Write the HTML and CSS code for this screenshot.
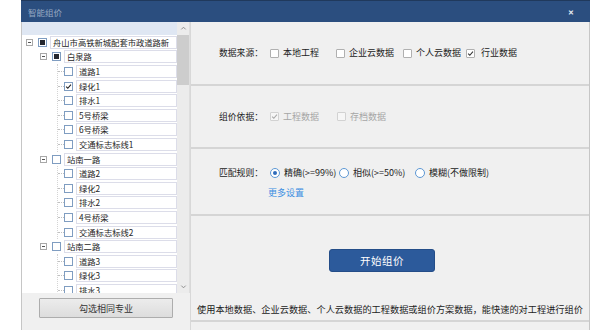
FILE: index.html
```html
<!DOCTYPE html>
<html lang="zh">
<head>
    <meta charset="UTF-8">
    <title>智能组价</title>
    <link rel="stylesheet" href="styles.css">
</head>
<body>
    <div class="dialog">
        <div class="titlebar">
            <span class="title">智能组价</span>
            <span class="close">✕</span>
        </div>

        <div class="body">
            <!-- Left: project tree -->
            <div class="left">
                <div class="tree-box">
                    <div class="tree">
                        <div class="tree-head"></div>

                        <div class="node root">
                            <span class="exp"></span><span class="tcb partial"></span><span class="lbl">舟山市高铁新城配套市政道路新</span>
                        </div>

                        <div class="node group">
                            <span class="exp"></span><span class="tcb partial"></span><span class="lbl">白泉路</span>
                        </div>
                        <div class="children">
                            <div class="node leaf"><span class="line"></span><span class="tcb"></span><span class="lbl">道路1</span></div>
                            <div class="node leaf"><span class="line"></span><span class="tcb checked"><svg viewBox="0 0 8 8"><polyline points="1.3,4.2 3.2,6 6.8,1.8"/></svg></span><span class="lbl">绿化1</span></div>
                            <div class="node leaf"><span class="line"></span><span class="tcb"></span><span class="lbl">排水1</span></div>
                            <div class="node leaf"><span class="line"></span><span class="tcb"></span><span class="lbl">5号桥梁</span></div>
                            <div class="node leaf"><span class="line"></span><span class="tcb"></span><span class="lbl">6号桥梁</span></div>
                            <div class="node leaf"><span class="line"></span><span class="tcb"></span><span class="lbl">交通标志标线1</span></div>
                        </div>

                        <div class="node group">
                            <span class="exp"></span><span class="tcb"></span><span class="lbl">站南一路</span>
                        </div>
                        <div class="children">
                            <div class="node leaf"><span class="line"></span><span class="tcb"></span><span class="lbl">道路2</span></div>
                            <div class="node leaf"><span class="line"></span><span class="tcb"></span><span class="lbl">绿化2</span></div>
                            <div class="node leaf"><span class="line"></span><span class="tcb"></span><span class="lbl">排水2</span></div>
                            <div class="node leaf"><span class="line"></span><span class="tcb"></span><span class="lbl">4号桥梁</span></div>
                            <div class="node leaf"><span class="line"></span><span class="tcb"></span><span class="lbl">交通标志标线2</span></div>
                        </div>

                        <div class="node group">
                            <span class="exp"></span><span class="tcb"></span><span class="lbl">站南二路</span>
                        </div>
                        <div class="children">
                            <div class="node leaf"><span class="line"></span><span class="tcb"></span><span class="lbl">道路3</span></div>
                            <div class="node leaf"><span class="line"></span><span class="tcb"></span><span class="lbl">绿化3</span></div>
                            <div class="node leaf"><span class="line"></span><span class="tcb"></span><span class="lbl">排水3</span></div>
                        </div>
                    </div>

                    <div class="scrollbar">
                        <span class="arrow"><svg viewBox="0 0 8 8"><polyline points="1.5,5 4,2.5 6.5,5"/></svg></span>
                        <div class="thumb"></div>
                        <span class="arrow"><svg viewBox="0 0 8 8"><polyline points="1.5,3 4,5.5 6.5,3"/></svg></span>
                    </div>
                </div>

                <div class="left-foot">
                    <button class="btn-same">勾选相同专业</button>
                </div>
            </div>

            <!-- Right: options -->
            <div class="right">
                <div class="sec sec-source">
                    <span class="field-label">数据来源：</span>
                    <label class="opt w66"><span class="chk"></span>本地工程</label>
                    <label class="opt w67"><span class="chk"></span>企业云数据</label>
                    <label class="opt w63"><span class="chk"></span>个人云数据</label>
                    <label class="opt"><span class="chk"><svg viewBox="0 0 8 8"><polyline points="1.3,4.2 3.2,6 6.8,1.8"/></svg></span>&nbsp;行业数据</label>
                </div>

                <div class="sec sec-basis">
                    <span class="field-label">组价依据：</span>
                    <label class="opt w67 disabled"><span class="chk"><svg viewBox="0 0 8 8"><polyline points="1.3,4.2 3.2,6 6.8,1.8"/></svg></span>工程数据</label>
                    <label class="opt disabled"><span class="chk"></span>存档数据</label>
                </div>

                <div class="sec sec-rule">
                    <div class="rule-row">
                        <span class="field-label">匹配规则：</span>
                        <label class="opt w69"><span class="radio on"></span>精确(&gt;=99%)</label>
                        <label class="opt w76"><span class="radio"></span>相似(&gt;=50%)</label>
                        <label class="opt"><span class="radio"></span>模糊(不做限制)</label>
                    </div>
                    <a class="more" href="#">更多设置</a>
                </div>

                <div class="sec sec-start">
                    <button class="btn-start">开始组价</button>
                    <p class="desc">使用本地数据、企业云数据、个人云数据的工程数据或组价方案数据，能快速的对工程进行组价</p>
                </div>
            </div>
        </div>
    </div>
</body>
</html>
```

FILE: styles.css
```css
* {
    margin: 0;
    padding: 0;
    box-sizing: border-box;
}

body {
    background-color: #ffffff;
    font-family: "Noto Sans CJK SC", "Liberation Sans", sans-serif;
    color: #222;
}

.dialog {
    margin-left: 21px;
    width: 569px;
    height: 330px;
    overflow: hidden;
    display: flex;
    flex-direction: column;
}

/* Title bar */
.titlebar {
    height: 22px;
    flex-shrink: 0;
    background-color: #2b4e7f;
    border-top: 1px solid #20395c;
    display: flex;
    align-items: center;
    justify-content: space-between;
    padding: 0 16px 0 7px;
}

.title {
    font-size: 8.5px;
    color: #97a9c3;
}

.close {
    font-size: 7px;
    font-weight: bold;
    color: #e8edf4;
}

.body {
    flex: 1;
    display: flex;
    background-color: #f0f0f0;
    border-left: 1px solid #c6c6c6;
    border-right: 1px solid #c6c6c6;
}

/* Tree */
.left {
    width: 168px;
    display: flex;
    flex-direction: column;
}

.tree-box {
    height: 271px;
    display: flex;
    background-color: #ffffff;
    overflow: hidden;
}

.tree {
    flex: 1;
    overflow: hidden;
    font-size: 8.3px;
    color: #1e1e1e;
}

.tree-head {
    height: 13px;
    background-color: #dfe7f3;
}

.node {
    height: 14.6px;
    display: flex;
    align-items: center;
}

.node.root {
    padding-left: 4px;
}

.node.group {
    padding-left: 18px;
}

.exp {
    width: 7px;
    height: 7px;
    border: 1px solid #a8a8a8;
    background-color: #fff;
    margin-right: 5px;
    display: flex;
    align-items: center;
    justify-content: center;
}

.exp::after {
    content: "";
    width: 3px;
    height: 1px;
    background-color: #555;
}

.tcb {
    width: 9px;
    height: 9px;
    flex-shrink: 0;
    border: 1px solid #7f9dc1;
    background-color: #fff;
    margin-right: 3px;
    display: flex;
    align-items: center;
    justify-content: center;
}

.tcb.partial::after {
    content: "";
    width: 5px;
    height: 5px;
    background-color: #26282e;
}

.tcb svg {
    width: 7px;
    height: 7px;
    fill: none;
    stroke: #222;
    stroke-width: 1.3;
}

.lbl {
    flex: 1;
    height: 13px;
    border: 1px solid #dcdde9;
    background-color: #fff;
    padding-left: 2px;
    line-height: 11px;
    white-space: nowrap;
    overflow: hidden;
}

.children {
    margin-left: 35px;
    border-left: 1px dotted #d4d4d4;
}

.line {
    width: 6px;
    border-top: 1px dotted #c0c0c0;
}

.scrollbar {
    width: 13px;
    background-color: #ececec;
    border-right: 1px solid #dedede;
    display: flex;
    flex-direction: column;
    justify-content: space-between;
}

.arrow {
    height: 13px;
    display: flex;
    align-items: center;
    justify-content: center;
}

.arrow svg {
    width: 7px;
    height: 7px;
    fill: none;
    stroke: #8a8a8a;
    stroke-width: 1.1;
}

.thumb {
    height: 50px;
    background-color: #cdcdcd;
    margin-bottom: auto;
}

.left-foot {
    flex: 1;
    display: flex;
    justify-content: center;
    padding-top: 5px;
}

.btn-same {
    width: 134px;
    height: 20px;
    font-family: inherit;
    font-size: 9px;
    color: #333;
    background: linear-gradient(#ececec, #dddddd);
    border: 1px solid #adadad;
    border-radius: 1px;
}

/* Right panel */
.right {
    flex: 1;
    border-left: 1px solid #d8d8d8;
    display: flex;
    flex-direction: column;
}

.sec {
    border-bottom: 2px solid #d5d5d5;
    padding-left: 28px;
    display: flex;
}

.sec-source {
    height: 64px;
    align-items: center;
}

.sec-basis {
    height: 63px;
    align-items: center;
}

.sec-rule {
    height: 67px;
    flex-direction: column;
    padding-top: 18px;
}

.rule-row {
    display: flex;
    align-items: center;
}

.sec-start {
    height: 106px;
    flex-direction: column;
    padding-left: 0;
    padding-top: 33px;
}

.field-label {
    width: 51px;
    font-size: 8.8px;
    line-height: 12px;
    color: #222;
}

.opt {
    display: flex;
    align-items: center;
    font-size: 9px;
    line-height: 12px;
    color: #222;
}

.w63 { width: 63px; }
.w66 { width: 66px; }
.w67 { width: 67px; }
.w69 { width: 69px; }
.w76 { width: 76px; }

.chk {
    width: 9px;
    height: 9px;
    border: 1px solid #b0b0b0;
    border-radius: 1px;
    background-color: #fff;
    margin-right: 4px;
    display: flex;
    align-items: center;
    justify-content: center;
}

.chk svg {
    width: 7px;
    height: 7px;
    fill: none;
    stroke: #333;
    stroke-width: 1.2;
}

.opt.disabled {
    color: #a6a6a6;
}

.opt.disabled .chk {
    border-color: #d2d2d2;
    background-color: #f6f6f6;
}

.opt.disabled .chk svg {
    stroke: #a8a8a8;
}

.radio {
    width: 10px;
    height: 10px;
    border: 1px solid #5c97d4;
    border-radius: 50%;
    background-color: #fff;
    margin-right: 4px;
    display: flex;
    align-items: center;
    justify-content: center;
}

.radio.on::after {
    content: "";
    width: 4px;
    height: 4px;
    border-radius: 50%;
    background-color: #2f6cbb;
}

.more {
    margin-left: 49px;
    margin-top: 8px;
    font-size: 9px;
    line-height: 12px;
    color: #3b8ee2;
    text-decoration: none;
}

.btn-start {
    width: 106px;
    height: 23px;
    margin-left: 138px;
    background-color: #2c5a9b;
    color: #fff;
    border: 1px solid #244d88;
    border-radius: 3px;
    font-family: inherit;
    font-size: 10.5px;
    letter-spacing: 0.5px;
}

.desc {
    margin-top: 31px;
    font-size: 9.2px;
    line-height: 12px;
    text-align: center;
    color: #222;
    white-space: nowrap;
}
```
